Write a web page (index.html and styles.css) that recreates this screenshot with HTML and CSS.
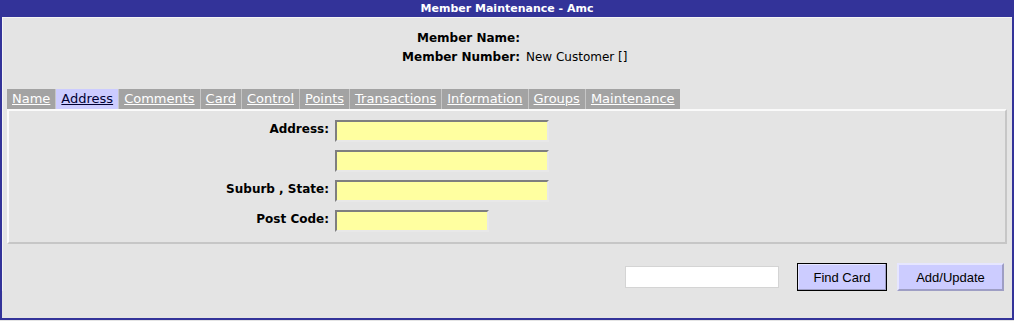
FILE: index.html
```html
<!DOCTYPE html>
<html lang="en">
<head>
    <meta charset="UTF-8">
    <title>Member Maintenance - Amc</title>
    <link rel="stylesheet" href="styles.css">
</head>
<body>
    <div class="window">
        <div class="titlebar">Member Maintenance - Amc</div>
        <div class="content">
            <div class="member-info">
                <span class="info-label">Member Name:</span>
                <span class="info-value"></span>
                <span class="info-label">Member Number:</span>
                <span class="info-value">New Customer []</span>
            </div>

            <div class="tabs">
                <a href="#" class="tab">Name</a>
                <a href="#" class="tab active">Address</a>
                <a href="#" class="tab">Comments</a>
                <a href="#" class="tab">Card</a>
                <a href="#" class="tab">Control</a>
                <a href="#" class="tab">Points</a>
                <a href="#" class="tab">Transactions</a>
                <a href="#" class="tab">Information</a>
                <a href="#" class="tab">Groups</a>
                <a href="#" class="tab">Maintenance</a>
            </div>

            <div class="panel">
                <div class="form-grid">
                    <label for="addr1">Address:</label>
                    <input type="text" id="addr1" class="field">
                    <span></span>
                    <input type="text" id="addr2" class="field">
                    <label for="suburb">Suburb , State:</label>
                    <input type="text" id="suburb" class="field">
                    <label for="postcode">Post Code:</label>
                    <input type="text" id="postcode" class="field short">
                </div>
            </div>

            <div class="actions">
                <input type="text" class="card-input">
                <button class="btn default">Find Card</button>
                <button class="btn">Add/Update</button>
            </div>
        </div>
    </div>
</body>
</html>
```

FILE: styles.css
```css
body {
    margin: 0;
    font-family: "DejaVu Sans", Verdana, sans-serif;
    background-color: #e4e4e4;
}
.window {
    width: 1014px;
    height: 320px;
    box-sizing: border-box;
    border: 2px solid #333399;
    border-top: none;
    background-color: #e4e4e4;
}
.titlebar {
    background-color: #333399;
    color: #fff;
    font-size: 11px;
    font-weight: bold;
    text-align: center;
    height: 17px;
    line-height: 17px;
}
.content {
    border-top: 1px solid #f4f4f4;
    border-left: 1px solid #f4f4f4;
}
.member-info {
    display: grid;
    grid-template-columns: 517px auto;
    column-gap: 6px;
    padding-top: 11px;
    font-size: 12px;
    line-height: 19px;
}
.info-label {
    font-weight: bold;
    text-align: right;
}
/* tab strip */
.tabs {
    display: flex;
    margin-top: 22px;
    margin-left: 4px;
    height: 20px;
}
.tab {
    background-color: #a3a3a3;
    color: #fff;
    font-size: 13px;
    line-height: 20px;
    padding: 0 5px;
    border-left: 1px solid #c6c6c6;
}
.tab:first-child {
    border-left: none;
}
.tab.active {
    background-color: #ccccff;
    color: #000033;
}
.panel {
    margin: 0 5px 0 4px;
    border: 2px solid;
    border-color: #fafafa #c6c6c6 #c6c6c6 #fafafa;
    padding: 9px 0 10px;
}
.form-grid {
    display: grid;
    grid-template-columns: 320px auto;
    column-gap: 6px;
    row-gap: 8px;
    justify-items: start;
}
.form-grid label {
    justify-self: end;
    font-size: 12px;
    font-weight: bold;
    padding-top: 2px;
}
.field {
    width: 214px;
    height: 22px;
    box-sizing: border-box;
    background-color: #ffffa0;
    border: 2px solid;
    border-color: #7f7f7f #e8e8e8 #e8e8e8 #7f7f7f;
    margin: 0;
}
.field.short {
    width: 154px;
}
.actions {
    display: flex;
    justify-content: flex-end;
    align-items: center;
    margin-top: 19px;
    margin-right: 8px;
}
.card-input {
    width: 154px;
    height: 22px;
    box-sizing: border-box;
    background-color: #fff;
    border: 1px solid #d4d4d4;
    margin: 0 8px 0 0;
}
.btn {
    height: 28px;
    box-sizing: border-box;
    background-color: #ccccff;
    font-family: "Liberation Sans", Arial, sans-serif;
    font-size: 13px;
    color: #000;
    border: 2px solid;
    border-color: #e6e6ff #9e9ec4 #9e9ec4 #e6e6ff;
    width: 107px;
    margin-left: 10px;
}
.btn.default {
    width: 90px;
    border: 1px solid #000;
    box-shadow: inset -1px -1px 0 #9e9ec4, inset 1px 1px 0 #e6e6ff;
}
```
